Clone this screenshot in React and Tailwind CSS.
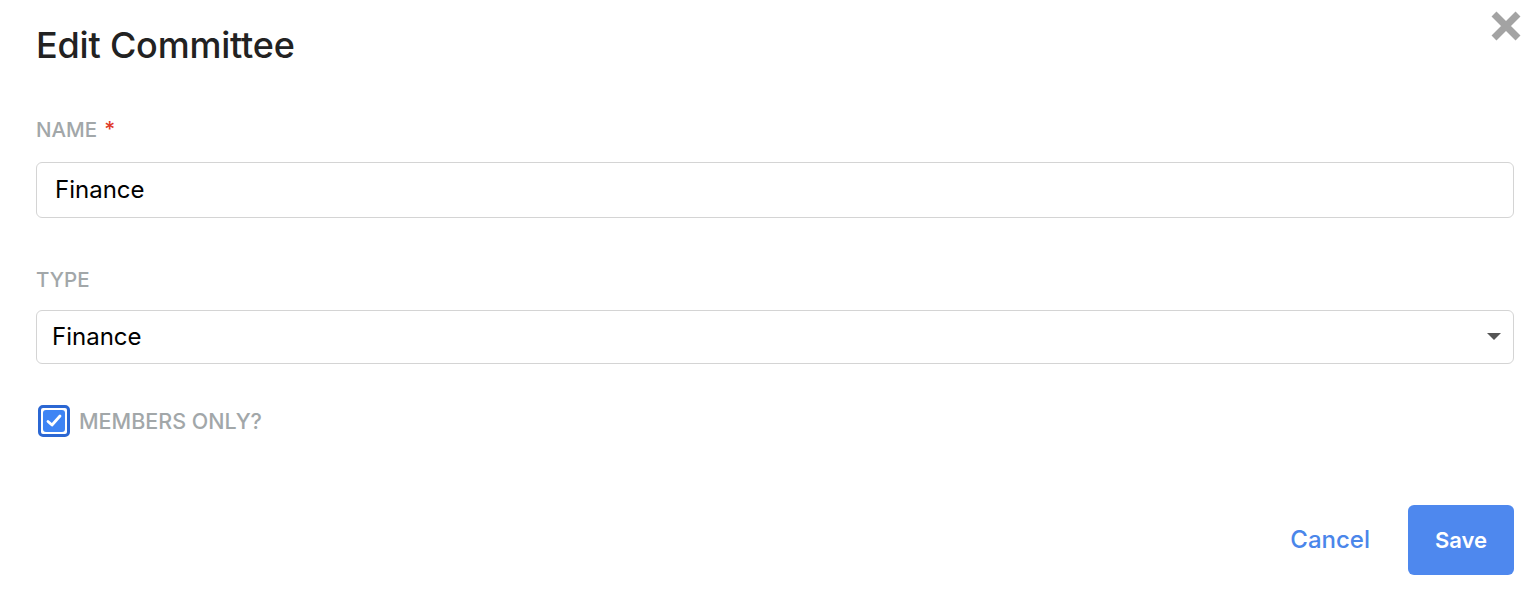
export default function App() {
  const font = { fontFamily: 'Inter, "Noto Sans", sans-serif' };
  return (
    <div className="relative w-[1534px] h-[604px] bg-white" style={font}>
      <button className="absolute right-[12px] top-[10px] w-[32px] h-[32px] flex items-center justify-center">
        <svg width="32" height="32" viewBox="0 0 32 32">
          <path d="M4 4 L28 28 M28 4 L4 28" stroke="#a3a3a3" strokeWidth="7" strokeLinecap="butt" />
        </svg>
      </button>
      <div className="pl-[36px] pr-[20px] pt-[22px]">
        <h1 className="text-[36px] leading-[46px] font-medium text-[#222] tracking-[-0.2px]">Edit Committee</h1>

        <div className="mt-[50px] flex items-center gap-[7px] text-[20.5px] leading-[24px] font-medium text-[#a2a7a9]">
          <span>NAME</span>
          <span className="text-[#e03b2a] text-[21px]">*</span>
        </div>
        <div className="mt-[20px] h-[56px] rounded-[6px] border border-[#d4d4d4] flex items-center pl-[18px] text-[24px] text-black">
          Finance
        </div>

        <div className="mt-[50px] text-[20.5px] leading-[24px] font-medium text-[#a2a7a9]">TYPE</div>
        <div className="mt-[18px] h-[54px] rounded-[6px] border border-[#d4d4d4] flex items-center justify-between pl-[15px] pr-[12px] text-[24px] text-black">
          <span>Finance</span>
          <svg width="14" height="8" viewBox="0 0 14 8">
            <path d="M0 0 L14 0 L7 7 Z" fill="#555" />
          </svg>
        </div>

        <div className="mt-[41px] flex items-center gap-[9px] ml-[2px]">
          <div className="w-[32px] h-[32px] rounded-[5px] border-[3px] border-[#2b67d3] p-[2px]">
            <div className="w-full h-full rounded-[3px] bg-[#3e84f4] flex items-center justify-center">
              <svg width="16" height="14" viewBox="0 0 16 14">
                <path d="M2 7.5 L6 11 L14 2" stroke="white" strokeWidth="2.8" fill="none" strokeLinecap="round" strokeLinejoin="round" />
              </svg>
            </div>
          </div>
          <span className="text-[21.5px] font-medium text-[#a2a7a9]">MEMBERS ONLY?</span>
        </div>

        <div className="mt-[68px] flex justify-end items-center gap-[38px]">
          <button className="text-[24px] font-medium text-[#4a86ea]">Cancel</button>
          <button className="w-[106px] h-[70px] rounded-[6px] bg-[#4e88ee] text-white text-[22px] font-semibold">Save</button>
        </div>
      </div>
    </div>
  );
}
